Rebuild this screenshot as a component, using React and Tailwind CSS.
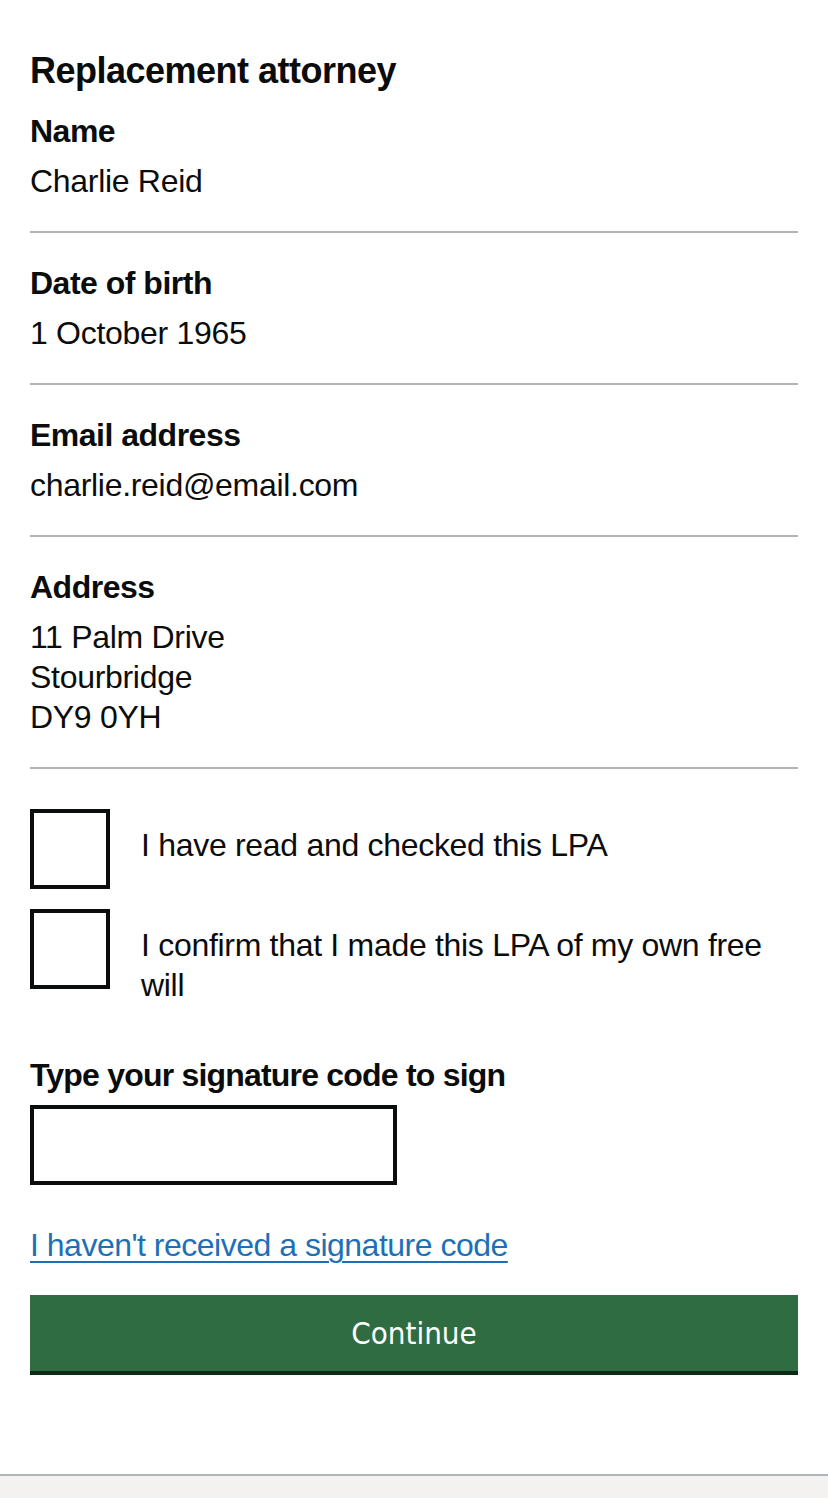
const rows = [
  { key: 'Name', value: ['Charlie Reid'] },
  { key: 'Date of birth', value: ['1 October 1965'] },
  { key: 'Email address', value: ['charlie.reid@email.com'] },
  { key: 'Address', value: ['11 Palm Drive', 'Stourbridge', 'DY9 0YH'] },
]

const checks = ['I have read and checked this LPA', 'I confirm that I made this LPA of my own free will']

export default function App() {
  return (
    <div className="flex min-h-[1498px] flex-col bg-white font-['Liberation_Sans',Arial,sans-serif] text-[#0b0c0c]">
      <main className="flex-1 px-[30px] pt-[51px]">
        <h2 className="mb-[20px] text-[36px] font-bold leading-[40px] tracking-[-0.5px]">Replacement attorney</h2>

        <dl>
          {rows.map((row) => (
            <div key={row.key} className="mb-[30px] border-b-2 border-[#b1b4b6] pb-[30px]">
              <dt className="text-[32px] font-bold leading-[40px] tracking-[-0.5px]">{row.key}</dt>
              <dd className="mt-[10px] text-[32px] leading-[40px] tracking-[-0.3px]">
                {row.value.map((line) => (
                  <div key={line}>{line}</div>
                ))}
              </dd>
            </div>
          ))}
        </dl>

        <div className="mt-[40px] flex flex-col gap-[20px]">
          {checks.map((text) => (
            <label key={text} className="flex items-start">
              <span className="h-[80px] w-[80px] shrink-0 border-4 border-[#0b0c0c] bg-white" />
              <span className="flex-1 pl-[31px] pr-[30px] pt-[16px] pb-[16px] text-[32px] leading-[40px] tracking-[-0.3px]">
                {text}
              </span>
            </label>
          ))}
        </div>

        <h3 className="mt-[34px] text-[32px] font-bold leading-[40px] tracking-[-0.8px]">Type your signature code to sign</h3>
        <div className="mt-[10px] h-[80px] w-[367px] border-4 border-[#0b0c0c] bg-white" />

        <a href="#" className="mt-[40px] block w-fit text-[32px] leading-[40px] tracking-[-0.5px] text-[#1d70b8] underline decoration-2 underline-offset-[5px]">
          I haven't received a signature code
        </a>

        <button
          type="button"
          className="mt-[30px] h-[76px] w-full bg-[#306c42] font-['DejaVu_Sans_Condensed','DejaVu_Sans',sans-serif] text-[31px] leading-[40px] text-white shadow-[0_4px_0_#0b2b15]"
        >
          Continue
        </button>
      </main>

      <footer className="h-[24px] border-t-2 border-[#b1b4b6] bg-[#f3f2f1]" />
    </div>
  )
}
